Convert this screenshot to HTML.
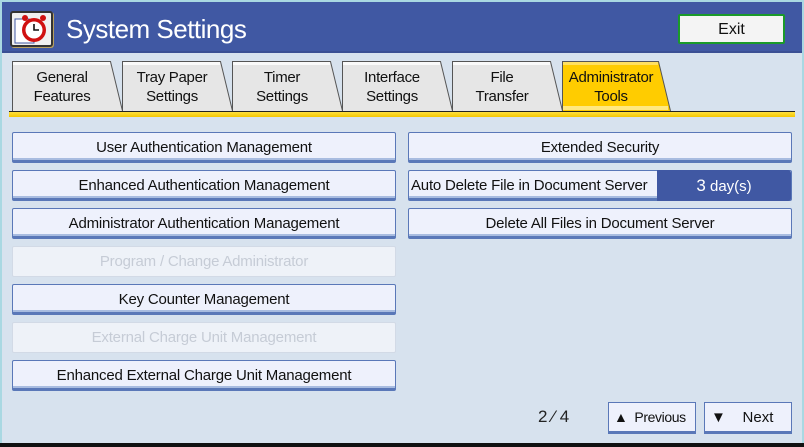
<!DOCTYPE html>
<html><head><style>
*{margin:0;padding:0;box-sizing:border-box}
body{width:804px;height:447px;background:#a9d8e2;font-family:"Liberation Sans",sans-serif;overflow:hidden;position:relative}
#main{position:absolute;left:2px;top:2px;width:800px;height:442px;background:#d7e2ee}
#hdr{position:absolute;left:2px;top:2px;width:800px;height:51px;background:#4058a3;border-bottom:2px solid #3a4f94}
#title{position:absolute;left:66px;top:14px;color:#fff;font-size:26px;letter-spacing:-0.5px}
#icon{position:absolute;left:10px;top:11px;width:43px;height:36px;background:#f0f0f0;border:2px solid #333;border-radius:3px;box-shadow:1px 1px 0 #b8a060}
#exit{position:absolute;left:678px;top:14px;width:107px;height:30px;background:#f4f4f4;border:2px solid #1a9a2a;border-radius:2px;font-size:16px;text-align:center;line-height:28px;color:#111}
.tt{position:absolute;top:68px;width:100px;text-align:center;font-size:15px;line-height:19px;color:#111;letter-spacing:-0.3px}
#bar{position:absolute;left:9px;top:111px;width:786px;height:6px;background:linear-gradient(#222 0 1px,#ffe040 1px,#f5c800);}
.b{position:absolute;height:31px;width:384px;background:#eef1fc;border:1px solid #5a78b8;border-bottom:3px solid #5a78b8;box-shadow:inset 0 -2px 0 #a8bce0;border-radius:2px;text-align:center;font-size:15px;line-height:29px;color:#111;white-space:nowrap;letter-spacing:-0.2px}
.d{background:#eef2f8;border-color:#d2dae6;box-shadow:none;color:#c6ccd6;border-bottom-width:1px}
.sm{position:absolute;top:402px;height:32px;background:#eef1fc;border:1px solid #5a78b8;border-bottom:3px solid #5a78b8;font-size:15px;line-height:29px;color:#111;white-space:nowrap}
</style></head><body>
<div id="main"></div>
<div id="hdr"></div>
<div id="icon"><svg width="39" height="32" viewBox="0 0 39 32"><path d="M3 6h14l5 5v19H3z" fill="#fff" stroke="#4058a3"/><circle cx="22" cy="17" r="12" fill="#d01010"/><circle cx="22" cy="17" r="8.5" fill="#fff"/><path d="M22 11v6h5" stroke="#111" stroke-width="1.6" fill="none"/><circle cx="13" cy="5" r="3" fill="#d01010"/><circle cx="31" cy="5" r="3" fill="#d01010"/></svg></div>
<div id="title">System Settings</div>
<div id="exit">Exit</div>
<svg style="position:absolute;left:0;top:0" width="804" height="120">
<g stroke="#555" stroke-width="1">
<path d="M12.5 111V61.5h98l12 49.5" fill="#e6e6e6"/>
<path d="M122.5 111V61.5h98l12 49.5" fill="#e6e6e6"/>
<path d="M232.5 111V61.5h98l12 49.5" fill="#e6e6e6"/>
<path d="M342.5 111V61.5h98l12 49.5" fill="#e6e6e6"/>
<path d="M452.5 111V61.5h98l12 49.5" fill="#e6e6e6"/>
<path d="M562.5 111V61.5h96l12 49.5" fill="#ffcc00"/>
</g>
<g fill="#fafafa"><rect x="13" y="62" width="97" height="3"/><rect x="123" y="62" width="97" height="3"/><rect x="233" y="62" width="97" height="3"/><rect x="343" y="62" width="97" height="3"/><rect x="453" y="62" width="97" height="3"/></g>
<rect x="563" y="62" width="95" height="3" fill="#ffe060"/>
<rect x="563" y="106" width="105" height="4" fill="#ffe880"/>
</svg>
<div class="tt" style="left:12px">General<br>Features</div>
<div class="tt" style="left:122px">Tray Paper<br>Settings</div>
<div class="tt" style="left:232px">Timer<br>Settings</div>
<div class="tt" style="left:342px">Interface<br>Settings</div>
<div class="tt" style="left:452px">File<br>Transfer</div>
<div class="tt" style="left:561px;width:100px">Administrator<br>Tools</div>
<div id="bar"></div>
<div class="b" style="left:12px;top:132px">User Authentication Management</div>
<div class="b" style="left:12px;top:170px">Enhanced Authentication Management</div>
<div class="b" style="left:12px;top:208px">Administrator Authentication Management</div>
<div class="b d" style="left:12px;top:246px">Program / Change Administrator</div>
<div class="b" style="left:12px;top:284px">Key Counter Management</div>
<div class="b d" style="left:12px;top:322px">External Charge Unit Management</div>
<div class="b" style="left:12px;top:360px">Enhanced External Charge Unit Management</div>
<div class="b" style="left:408px;top:132px">Extended Security</div>
<div class="b" style="left:408px;top:170px;text-align:left;padding-left:2px">Auto Delete File in Document Server</div>
<div style="position:absolute;left:657px;top:170px;width:134px;height:31px;background:#4058a3;border-radius:0 3px 3px 0;color:#fff;font-size:15px;line-height:31px;text-align:center"><span style="font-size:17px">3</span>&nbsp;day(s)</div>
<div class="b" style="left:408px;top:208px">Delete All Files in Document Server</div>
<div style="position:absolute;left:538px;top:407px;font-size:17px;color:#222">2 ⁄ 4</div>
<div class="sm" style="left:608px;width:88px;padding-left:5px;font-size:14px;letter-spacing:-0.4px">▲&nbsp;&nbsp;Previous</div>
<div class="sm" style="left:704px;width:88px;padding-left:6px">▼&nbsp;&nbsp;&nbsp;&nbsp;Next</div>
<div style="position:absolute;left:0;top:443px;width:804px;height:4px;background:#111"></div>
</body></html>
